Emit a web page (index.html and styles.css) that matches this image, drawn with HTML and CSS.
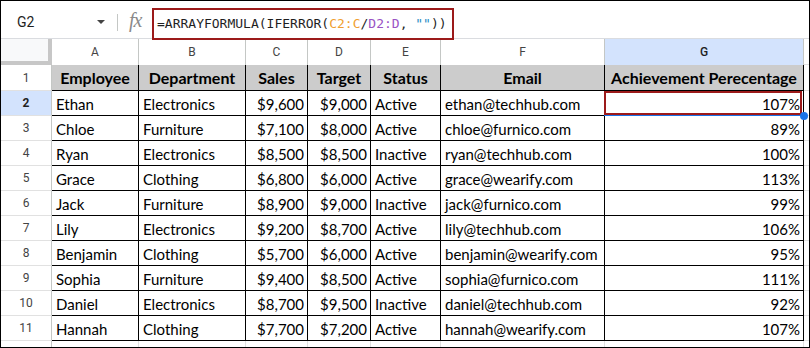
FILE: index.html
```html
<!DOCTYPE html>
<html lang="en">
<head>
  <meta charset="UTF-8">
  <meta name="viewport" content="width=device-width, initial-scale=1.0">
  <title>Achievement Sheet</title>
  <link rel="stylesheet" href="styles.css">
</head>
<body>

  <div class="sheet">
    <!-- Formula bar -->
    <div class="formula-bar">
      <div class="name-box">
        <span class="cell-ref">G2</span>
        <span class="caret"></span>
      </div>
      <span class="divider"></span>
      <span class="fx">fx</span>
      <div class="formula-input">=ARRAYFORMULA(IFERROR(<span class="ref-c">C2:C</span>/<span class="ref-d">D2:D</span>, <span class="str">""</span>))</div>
    </div>

    <!-- Grid -->
    <div class="grid">
      <div class="corner"></div>
      <div class="col-head">A</div>
      <div class="col-head">B</div>
      <div class="col-head">C</div>
      <div class="col-head">D</div>
      <div class="col-head">E</div>
      <div class="col-head">F</div>
      <div class="col-head active">G</div>
      <div class="col-head spare"></div>

      <div class="row-head">1</div>
      <div class="cell title">Employee</div>
      <div class="cell title">Department</div>
      <div class="cell title">Sales</div>
      <div class="cell title">Target</div>
      <div class="cell title">Status</div>
      <div class="cell title">Email</div>
      <div class="cell title">Achievement Perecentage</div>
      <div class="spare"></div>
    </div>
  </div>

  <script>
    // fill the data rows
    const rows = [
      ['Ethan', 'Electronics', '$9,600', '$9,000', 'Active', 'ethan@techhub.com', '107%'],
      ['Chloe', 'Furniture', '$7,100', '$8,000', 'Active', 'chloe@furnico.com', '89%'],
      ['Ryan', 'Electronics', '$8,500', '$8,500', 'Inactive', 'ryan@techhub.com', '100%'],
      ['Grace', 'Clothing', '$6,800', '$6,000', 'Active', 'grace@wearify.com', '113%'],
      ['Jack', 'Furniture', '$8,900', '$9,000', 'Inactive', 'jack@furnico.com', '99%'],
      ['Lily', 'Electronics', '$9,200', '$8,700', 'Active', 'lily@techhub.com', '106%'],
      ['Benjamin', 'Clothing', '$5,700', '$6,000', 'Active', 'benjamin@wearify.com', '95%'],
      ['Sophia', 'Furniture', '$9,400', '$8,500', 'Active', 'sophia@furnico.com', '111%'],
      ['Daniel', 'Electronics', '$8,700', '$9,500', 'Inactive', 'daniel@techhub.com', '92%'],
      ['Hannah', 'Clothing', '$7,700', '$7,200', 'Active', 'hannah@wearify.com', '107%']
    ];
    const numeric = [2, 3, 6];
    const grid = document.querySelector('.grid');

    function add(cls, text) {
      const el = document.createElement('div');
      el.className = cls;
      el.textContent = text;
      grid.appendChild(el);
      return el;
    }

    rows.forEach(function (row, i) {
      add(i === 0 ? 'row-head active' : 'row-head', i + 2);
      row.forEach(function (value, j) {
        const el = add(numeric.includes(j) ? 'cell num' : 'cell', value);
        if (i === 0 && j === 6) {
          el.classList.add('selected');
          el.insertAdjacentHTML('beforeend', '<span class="sel-box"></span><span class="handle"></span>');
        }
      });
      add('spare', '');
    });

    // partly visible row 12
    add('row-head', 12);
    for (let j = 0; j < 7; j++) add('cell empty', '');
    add('spare', '');
  </script>

</body>
</html>
```

FILE: styles.css
```css
/* Reset and base styling */
* {
  margin: 0;
  padding: 0;
  box-sizing: border-box;
}

body {
  font-family: 'Lato', sans-serif;
  background: #fff;
}

/* Outer frame */
.sheet {
  width: 810px;
  height: 348px;
  border: 1px solid #000;
  overflow: hidden;
  background: #fff;
}

/* Formula bar */
.formula-bar {
  height: 38px;
  display: flex;
  align-items: flex-start;
  border-bottom: 1px solid #dadce0;
  font-family: 'Roboto', sans-serif;
  color: #1f1f1f;
}

.name-box {
  width: 111px;
  height: 30px;
  margin-top: 6px;
  padding-left: 16px;
  display: flex;
  align-items: center;
  justify-content: space-between;
}

.cell-ref {
  font-size: 14px;
}

.caret {
  width: 0;
  height: 0;
  border-left: 4px solid transparent;
  border-right: 4px solid transparent;
  border-top: 4px solid #444;
  margin-right: 7px;
}

.divider {
  width: 1px;
  height: 17px;
  margin: 13px 0 0 5px;
  background: #c4c7c5;
}

.fx {
  margin: 8px 0 0 11px;
  width: 23px;
  font-family: 'Liberation Serif', serif;
  font-style: italic;
  font-size: 20px;
  color: #8a8a8a;
  letter-spacing: -1px;
}

.formula-input {
  position: relative;
  z-index: 2;
  width: 302px;
  height: 32px;
  margin-top: 7px;
  padding-left: 3px;
  border: 2px solid #9c1a1a;
  font-family: 'DejaVu Sans Mono', monospace;
  font-size: 13px;
  line-height: 28px;
  color: #1f1f1f;
  white-space: nowrap;
}

.ref-c { color: #f0a030; }
.ref-d { color: #9a52c4; }
.str { color: #1d8ac4; }

/* Spreadsheet grid */
.grid {
  display: grid;
  grid-template-columns: 51px 87px 107px 62px 63px 70px 164px 199px 5px;
  grid-template-rows: 26px 26px;
  grid-auto-rows: 25px;
}

.corner {
  background: #f8f9fa;
  border-right: 4px solid #c7c7c7;
  border-bottom: 4px solid #c7c7c7;
}

.col-head {
  display: flex;
  align-items: center;
  justify-content: center;
  font-family: 'Roboto', sans-serif;
  font-size: 12px;
  color: #444;
  border-right: 1px solid #c4c7c5;
}

.col-head.active {
  background: #d3e3fd;
  color: #1f1f1f;
  font-weight: 500;
}

.col-head.spare {
  border-right: none;
}

.row-head {
  display: flex;
  align-items: center;
  justify-content: center;
  font-family: 'Roboto', sans-serif;
  font-size: 12px;
  color: #444;
  border-right: 1px solid #c4c7c5;
  border-bottom: 1px solid #e1e1e1;
}

.row-head.active {
  background: #d3e3fd;
  color: #1f1f1f;
  font-weight: 700;
}

.cell {
  display: flex;
  align-items: center;
  padding: 1px 3px 0 4px;
  font-size: 15px;
  color: #000;
  white-space: nowrap;
  overflow: hidden;
  border-right: 1px solid #000;
  border-bottom: 1px solid #000;
}

.cell.title {
  justify-content: center;
  background: #cccccc;
  font-size: 16px;
  font-weight: 700;
  padding: 0;
}

.cell.num {
  justify-content: flex-end;
}

.cell.empty {
  border-right-color: #e1e1e1;
  border-bottom: none;
}

.spare {
  border-bottom: 1px solid #e1e1e1;
}

/* Selected cell */
.cell.selected {
  position: relative;
  overflow: visible;
}

.sel-box {
  position: absolute;
  top: 0;
  left: -1px;
  right: 1px;
  bottom: 0;
  border: 2px solid #9c1a1a;
  box-shadow: 0 1px 0 #1a73e8;
}

.handle {
  position: absolute;
  right: -5px;
  bottom: -5px;
  width: 8px;
  height: 8px;
  border-radius: 50%;
  background: #1a73e8;
  z-index: 3;
}
```
